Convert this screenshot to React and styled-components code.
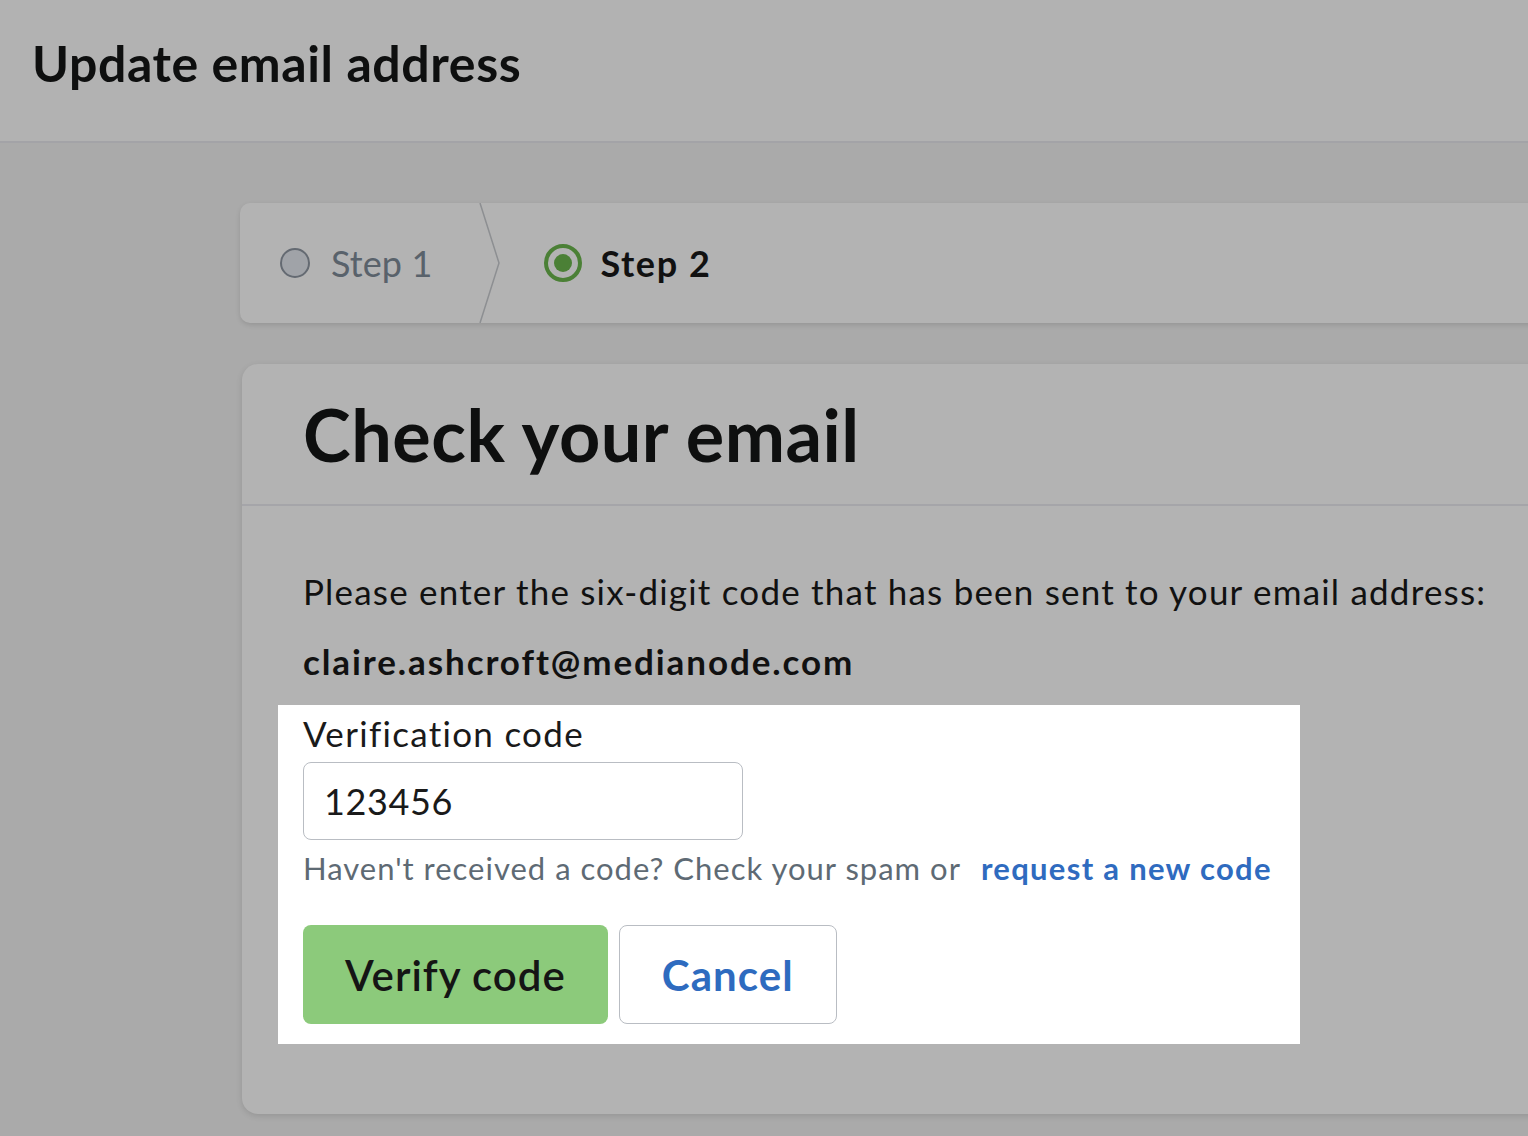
import React from 'react';
import styled, { createGlobalStyle } from 'styled-components';

const GlobalStyle = createGlobalStyle`
  html, body {
    margin: 0;
    padding: 0;
    background: #aaaaaa;
    overflow: hidden;
  }
  body {
    font-family: Lato, 'Open Sans', sans-serif;
    color: #111;
  }
`;

const Page = styled.div`
  min-height: 1136px;
  width: 1528px;
  overflow: hidden;
`;

const TopBar = styled.header`
  height: 143px;
  background: #b2b2b2;
  border-bottom: 2px solid #a3a3a7;
  display: flex;
  align-items: center;
  padding-left: 32px;
  box-sizing: border-box;
`;

const PageTitle = styled.h1`
  margin: 0 0 16px;
  font-size: 50px;
  font-weight: 700;
  color: #0e0f0f;
  letter-spacing: 0.6px;
`;

const Main = styled.main`
  padding: 60px 0 0 240px;
`;

const Stepper = styled.nav`
  display: flex;
  align-items: center;
  height: 120px;
  width: 1500px;
  background: #b3b3b3;
  border-radius: 10px 0 0 10px;
  box-shadow: 0 2px 5px rgba(0, 0, 0, 0.12);
`;

const Step = styled.div`
  display: flex;
  align-items: center;
  gap: ${p => (p.$active ? 16 : 20)}px;
  padding-left: ${p => p.$pad}px;
  font-size: 36px;
  font-weight: ${p => (p.$active ? 700 : 400)};
  letter-spacing: ${p => (p.$active ? 1.6 : 0.1)}px;
  color: ${p => (p.$active ? '#111' : '#59626b')};
`;

const Divider = styled.svg`
  width: 24px;
  height: 120px;
  margin-left: 46px;
  flex-shrink: 0;
`;

const Card = styled.section`
  margin: 41px 0 0 2px;
  width: 1500px;
  height: 750px;
  background: #b3b3b3;
  border-radius: 16px 0 0 16px;
  box-shadow: 0 2px 6px rgba(0, 0, 0, 0.12);
`;

const CardHeader = styled.div`
  height: 142px;
  box-sizing: border-box;
  border-bottom: 2px solid #a5a5a9;
  display: flex;
  align-items: center;
  padding-left: 61px;
`;

const CardTitle = styled.h2`
  margin: 0;
  font-size: 72px;
  font-weight: 700;
  letter-spacing: 0.5px;
  color: #0e0f0f;
`;

const CardBody = styled.div`
  padding: 61px 0 0 61px;
`;

const Text = styled.p`
  margin: 0;
  font-size: 35px;
  line-height: 48px;
  font-weight: ${p => (p.$bold ? 700 : 400)};
  letter-spacing: ${p => (p.$bold ? 1.9 : 1.2)}px;
  color: #111;
  & + & {
    margin-top: 22px;
  }
`;

const Spotlight = styled.div`
  width: 1022px;
  box-sizing: border-box;
  margin: 20px 0 0 -25px;
  padding: 4px 25px 20px;
  background: #fff;
`;

const Label = styled.label`
  display: block;
  font-size: 35px;
  line-height: 48px;
  letter-spacing: 1.3px;
  color: #1a1a1a;
`;

const CodeInput = styled.input`
  display: block;
  margin-top: 5px;
  width: 440px;
  height: 78px;
  box-sizing: border-box;
  border: 1.5px solid #b9bdc3;
  border-radius: 8px;
  padding: 0 20px;
  font-family: inherit;
  font-size: 36px;
  letter-spacing: 0.6px;
  color: #1a1a1a;
  outline: none;
`;

const Hint = styled.p`
  margin: 6px 0 0;
  font-size: 31px;
  line-height: 44px;
  letter-spacing: 1px;
  color: #5e6a74;
`;

const Link = styled.a`
  margin-left: 20px;
  font-weight: 700;
  letter-spacing: 1.3px;
  color: #2f6bbf;
  text-decoration: none;
`;

const Actions = styled.div`
  display: flex;
  gap: 11px;
  margin-top: 35px;
`;

const Button = styled.button`
  height: 99px;
  box-sizing: border-box;
  padding: 0 42px;
  border-radius: 8px;
  font-family: inherit;
  font-size: 42px;
  font-weight: ${p => (p.$primary ? 600 : 700)};
  letter-spacing: ${p => (p.$primary ? 1 : 1.1)}px;
  cursor: pointer;
  border: ${p => (p.$primary ? 'none' : '1.5px solid #b9bdc3')};
  background: ${p => (p.$primary ? '#8cca7b' : '#fff')};
  color: ${p => (p.$primary ? '#151515' : '#2e6bbf')};
`;

function StepDot({ active }) {
  if (active) {
    return (
      <svg width="42" height="42" viewBox="0 0 42 42">
        <circle cx="21" cy="21" r="17" fill="none" stroke="#4b8036" strokeWidth="4" />
        <circle cx="21" cy="21" r="9" fill="#4b8036" />
      </svg>
    );
  }
  return (
    <svg width="32" height="32" viewBox="0 0 32 32">
      <circle cx="16" cy="16" r="14" fill="#a0a3a8" stroke="#646a72" strokeWidth="2" />
    </svg>
  );
}

export default function App() {
  return (
    <Page>
      <GlobalStyle />
      <TopBar>
        <PageTitle>Update email address</PageTitle>
      </TopBar>
      <Main>
        <Stepper>
          <Step $pad={39}>
            <StepDot />
            Step 1
          </Step>
          <Divider viewBox="0 0 24 120">
            <polyline points="2,0 21,60 2,120" fill="none" stroke="#8d8f92" strokeWidth="1.5" />
          </Divider>
          <Step $pad={40} $active>
            <StepDot active />
            Step 2
          </Step>
        </Stepper>

        <Card>
          <CardHeader>
            <CardTitle>Check your email</CardTitle>
          </CardHeader>
          <CardBody>
            <Text>Please enter the six-digit code that has been sent to your email address:</Text>
            <Text $bold>claire.ashcroft@medianode.com</Text>
            <Spotlight>
              <Label htmlFor="code">Verification code</Label>
              <CodeInput id="code" defaultValue="123456" />
              <Hint>
                Haven't received a code? Check your spam or
                <Link href="#">request a new code</Link>
              </Hint>
              <Actions>
                <Button $primary>Verify code</Button>
                <Button>Cancel</Button>
              </Actions>
            </Spotlight>
          </CardBody>
        </Card>
      </Main>
    </Page>
  );
}
